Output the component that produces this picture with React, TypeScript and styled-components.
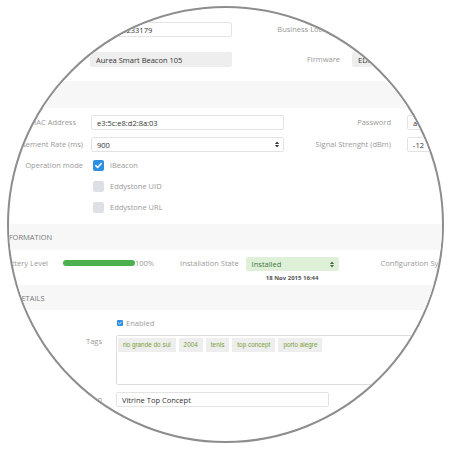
import React from 'react'
import styled, { createGlobalStyle } from 'styled-components'

const GlobalStyle = createGlobalStyle`
  html, body {
    margin: 0;
    padding: 0;
    background: #fff;
  }
  body {
    font-family: "Open Sans", "DejaVu Sans", sans-serif;
  }
`

const Arrows = ({ color = '#333' }: { color?: string }) => (
  <svg width="4" height="7" viewBox="0 0 4 7">
    <polygon points="0,3 2,0.4 4,3" fill={color} />
    <polygon points="0,4 2,6.6 4,4" fill={color} />
  </svg>
)

const Tick = ({ size = 11 }: { size?: number }) => (
  <svg width={size} height={size} viewBox="0 0 11 11">
    <path d="M2.8 5.6 L4.7 7.5 L8.3 3.6" fill="none" stroke="#fff" strokeWidth="1.5" strokeLinecap="round" strokeLinejoin="round" />
  </svg>
)

const tags = ['rio grande do sul', '2004', 'tenis', 'top concept', 'porto alegre']

export default function App() {
  return (
    <>
      <GlobalStyle />
      <Lens>
        <Page>
          <TopSection>
            <Label>Serial Number</Label>
            <Field readOnly value="F6B1A0E233179" />
            <Label $pad={4}>Business Location</Label>
            <Field readOnly value="Shopping Center" />

            <Label>Model</Label>
            <Field readOnly $locked value="Aurea Smart Beacon 105" />
            <Label $pad={4}>Firmware</Label>
            <Field readOnly $locked value="EDSv2.1" />
          </TopSection>

          <Band $h={27} $indent={74}>Settings</Band>

          <ConfigSection>
            <Label $pad={7}>MAC Address</Label>
            <Field readOnly value="e3:5c:e8:d2:8a:03" />
            <Label $pad={8}>Password</Label>
            <Field readOnly value="a4d9c2" />

            <Label>Advertisement Rate (ms)</Label>
            <SelectBox>
              <span>900</span>
              <Arrows />
            </SelectBox>
            <Label $pad={8}>Signal Strenght (dBm)</Label>
            <Field readOnly value="-12" />

            <StackLabel>Operation mode</StackLabel>
            <CheckList>
              <CheckRow>
                <Box $checked>
                  <Tick />
                </Box>
                iBeacon
              </CheckRow>
              <CheckRow>
                <Box />
                Eddystone UID
              </CheckRow>
              <CheckRow>
                <Box />
                Eddystone URL
              </CheckRow>
            </CheckList>
          </ConfigSection>

          <Band $h={26} $indent={72}>Information</Band>

          <InfoSection>
            <BatteryLabel>Battery Level</BatteryLabel>
            <Bar />
            <Percent>100%</Percent>
            <InlineLabel $gap={26}>Installation State</InlineLabel>
            <StateField>
              <SelectBox $success>
                <span>Installed</span>
                <Arrows color="#3c6b34" />
              </SelectBox>
              <DateText>18 Nov 2015 16:44</DateText>
            </StateField>
            <InlineLabel $gap={42}>Configuration Sync</InlineLabel>
          </InfoSection>

          <Band $h={25} $indent={87}>Details</Band>

          <DetailsSection>
            <span />
            <EnabledRow>
              <SmallBox>
                <Tick size={6} />
              </SmallBox>
              Enabled
            </EnabledRow>

            <StackLabel>Tags</StackLabel>
            <TagBox>
              {tags.map((t) => (
                <Tag key={t}>{t}</Tag>
              ))}
            </TagBox>

            <Label>Description</Label>
            <Field readOnly $w={213} value="Vitrine Top Concept" />
          </DetailsSection>
        </Page>
      </Lens>
    </>
  )
}

const Lens = styled.div`
  width: 437px;
  height: 437px;
  box-sizing: border-box;
  margin: 6px 0 0 7px;
  border: 2px solid #8d8d8d;
  border-radius: 50%;
  overflow: hidden;
  background: #fff;
`

const Page = styled.div`
  width: 660px;
  margin-left: -80px;
  font-size: 7.5px;
  color: #999;
`

const TopSection = styled.div`
  display: grid;
  grid-template-columns: 153px 142px 104px 150px;
  column-gap: 8px;
  row-gap: 15px;
  align-items: center;
  padding: 14px 0;
`

const ConfigSection = styled.div`
  display: grid;
  grid-template-columns: 154px 193px 107px 120px;
  column-gap: 8px;
  row-gap: 7px;
  align-items: center;
  padding: 7px 0 11px;
`

const DetailsSection = styled.div`
  display: grid;
  grid-template-columns: 173px 1fr;
  column-gap: 14px;
  row-gap: 7px;
  align-items: center;
  padding-top: 8px;
`

const Label = styled.label<{ $pad?: number }>`
  text-align: right;
  white-space: nowrap;
  line-height: 15px;
  padding-right: ${(p) => p.$pad ?? 0}px;
  color: #999;
`

const StackLabel = styled(Label)`
  align-self: start;
  line-height: 12px;
`

const Field = styled.input<{ $locked?: boolean; $w?: number }>`
  box-sizing: border-box;
  width: ${(p) => (p.$w ? `${p.$w}px` : '100%')};
  height: 15px;
  margin: 0;
  padding: 0 5px;
  border: 1px solid ${(p) => (p.$locked ? '#eeeeee' : '#e3e3e3')};
  border-radius: 2px;
  background: ${(p) => (p.$locked ? '#eeeeee' : '#fff')};
  color: #333;
  font-family: "Open Sans", "DejaVu Sans", sans-serif;
  font-size: 7.5px;
  outline: none;
`

const SelectBox = styled.div<{ $success?: boolean }>`
  box-sizing: border-box;
  height: ${(p) => (p.$success ? 14 : 15)}px;
  width: ${(p) => (p.$success ? '93px' : '100%')};
  display: flex;
  align-items: center;
  justify-content: space-between;
  padding: 0 4px 0 5px;
  border: 1px solid ${(p) => (p.$success ? '#dff0d8' : '#e3e3e3')};
  border-radius: 2px;
  background: ${(p) => (p.$success ? '#dff0d8' : '#fff')};
  color: ${(p) => (p.$success ? '#3c763d' : '#333')};
  font-size: 7.5px;
`

const Band = styled.div<{ $h: number; $indent: number }>`
  height: ${(p) => p.$h}px;
  display: flex;
  align-items: center;
  padding-left: ${(p) => p.$indent}px;
  background: #f7f7f7;
  color: #777;
  font-size: 7.5px;
  text-transform: uppercase;
`

const CheckList = styled.div`
  display: flex;
  flex-direction: column;
  gap: 9px;
  padding-left: 2px;
`

const CheckRow = styled.div`
  display: flex;
  align-items: center;
  gap: 6px;
  height: 12px;
  color: #999;
`

const Box = styled.span<{ $checked?: boolean }>`
  width: 11px;
  height: 11px;
  border-radius: 2px;
  background: ${(p) => (p.$checked ? '#2d8fe2' : '#dde0e4')};
  display: flex;
  align-items: center;
  justify-content: center;
`

const InfoSection = styled.div`
  display: flex;
  align-items: flex-start;
  padding: 7px 0 3px;
`

const BatteryLabel = styled.span`
  width: 119px;
  text-align: right;
  line-height: 12px;
  white-space: nowrap;
`

const Bar = styled.div`
  width: 72px;
  height: 6px;
  margin: 3px 0 0 15px;
  border-radius: 3px;
  background: #4cb04f;
`

const Percent = styled.span`
  line-height: 12px;
`

const InlineLabel = styled.span<{ $gap: number }>`
  margin-left: ${(p) => p.$gap}px;
  line-height: 12px;
  white-space: nowrap;
`

const StateField = styled.div`
  display: flex;
  flex-direction: column;
  align-items: center;
  gap: 3px;
  margin-left: 7px;
`

const DateText = styled.span`
  font-size: 6px;
  font-weight: 700;
  color: #555;
  line-height: 8px;
`

const EnabledRow = styled.div`
  display: flex;
  align-items: center;
  gap: 3px;
  height: 10px;
  padding-left: 1px;
  color: #999;
`

const SmallBox = styled.span`
  width: 6px;
  height: 6px;
  border-radius: 1px;
  background: #2d8fe2;
  display: flex;
  align-items: center;
  justify-content: center;
`

const TagBox = styled.div`
  box-sizing: border-box;
  height: 50px;
  display: flex;
  align-items: flex-start;
  gap: 3px;
  padding: 2px 1px;
  border: 1px solid #ddd;
  border-radius: 2px;
`

const Tag = styled.span`
  height: 14px;
  padding: 0 5px;
  background: #eeeeee;
  color: #7b9e37;
  font-family: "Liberation Sans", Arial, sans-serif;
  font-size: 6.4px;
  line-height: 14px;
  white-space: nowrap;
`
